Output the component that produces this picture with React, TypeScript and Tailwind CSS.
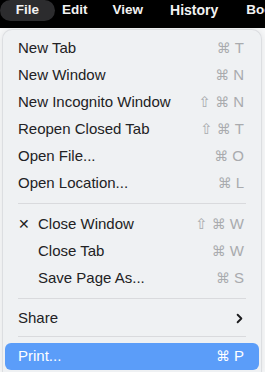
import { ChevronRight } from "lucide-react";

type Item = {
  label: string;
  keys?: string;
  checked?: boolean;
  indent?: boolean;
  submenu?: boolean;
  active?: boolean;
};

const font = { fontFamily: '"Liberation Sans", "DejaVu Sans", Arial, sans-serif' };
const glyphFont = { fontFamily: '"DejaVu Sans", sans-serif' };

function Keys({ keys }: { keys: string }) {
  return (
    <span className="flex items-center gap-[4px]">
      {keys.split(" ").map((k, i) => (
        <span
          key={i}
          className={k === "⌘" ? "text-[14px]" : "text-[15px]"}
          style={k === "⇧" || k === "⌘" ? glyphFont : undefined}
        >
          {k}
        </span>
      ))}
    </span>
  );
}

function Row({ item }: { item: Item }) {
  if (item.active) {
    return (
      <div className="mx-[2px] flex h-[27px] items-center justify-between rounded-[6px] bg-[#5b9df9] pl-[13px] pr-[15px] text-white">
        <span>{item.label}</span>
        {item.keys && <Keys keys={item.keys} />}
      </div>
    );
  }
  return (
    <div className="flex h-[27px] items-center justify-between pl-[15px] pr-[17px]">
      <div className="flex items-center">
        {item.checked && <span className="w-[20px] text-[14px]">✕</span>}
        {item.indent && <span className="w-[20px]" />}
        <span>{item.label}</span>
      </div>
      {item.keys && (
        <span className="text-[#a9abae]">
          <Keys keys={item.keys} />
        </span>
      )}
      {item.submenu && <ChevronRight size={15} strokeWidth={3} className="mr-[-3px] text-[#1d1d1f]" />}
    </div>
  );
}

function Sep({ h, top }: { h: string; top: string }) {
  return (
    <div className={h + " " + top + " px-[15px]"}>
      <div className="h-px bg-[#d9dadd]" />
    </div>
  );
}

export default function App() {
  const group1: Item[] = [
    { label: "New Tab", keys: "⌘ T" },
    { label: "New Window", keys: "⌘ N" },
    { label: "New Incognito Window", keys: "⇧ ⌘ N" },
    { label: "Reopen Closed Tab", keys: "⇧ ⌘ T" },
    { label: "Open File...", keys: "⌘ O" },
    { label: "Open Location...", keys: "⌘ L" },
  ];
  const group2: Item[] = [
    { label: "Close Window", keys: "⇧ ⌘ W", checked: true },
    { label: "Close Tab", keys: "⌘ W", indent: true },
    { label: "Save Page As...", keys: "⌘ S", indent: true },
  ];

  return (
    <div className="flex h-[372px] w-[265px] flex-col overflow-hidden bg-[#eef0f2]" style={font}>
      {/* menu bar */}
      <div className="flex h-[28px] shrink-0 items-start overflow-hidden bg-black text-[13.5px] font-bold text-[#f2f2f2]">
        <div className="flex h-[21px] w-[55px] shrink-0 items-center justify-center rounded-full bg-[#2c2c2e] pb-px">File</div>
        <div className="ml-[7px] flex h-[21px] shrink-0 items-center gap-[25px] pb-px">
          <span>Edit</span>
          <span>View</span>
          <span className="ml-[2px] text-[14px]">History</span>
          <span className="ml-[3px]">Bookmarks</span>
        </div>
      </div>

      <div className="flex flex-1 bg-[#f6f7f8] pl-[2px] pr-[3px] pt-px">
        <div className="flex-1 rounded-t-[10px] border border-b-0 border-[#dcdee1] bg-[#eff1f3] pt-[5px] text-[15px] text-[#222224] shadow-[0_0_6px_rgba(0,0,0,0.08)]">
          {group1.map((it) => (
            <Row key={it.label} item={it} />
          ))}
          <Sep h="h-[14px]" top="pt-[6px]" />
          {group2.map((it) => (
            <Row key={it.label} item={it} />
          ))}
          <Sep h="h-[13px]" top="pt-[6px]" />
          <Row item={{ label: "Share", submenu: true }} />
          <Sep h="h-[11px]" top="pt-[4px]" />
          <Row item={{ label: "Print...", keys: "⌘ P", active: true }} />
        </div>
      </div>
    </div>
  );
}
